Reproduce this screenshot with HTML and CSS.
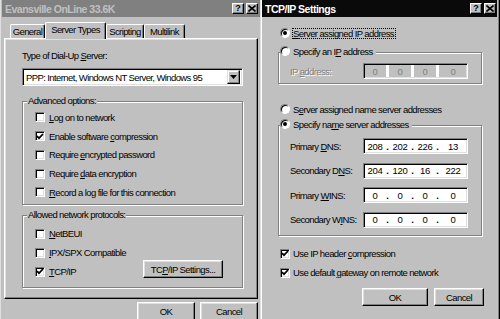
FILE: index.html
```html
<!DOCTYPE html>
<html>
<head>
<meta charset="utf-8">
<title>Dial-Up Server Types</title>
<link rel="stylesheet" href="styles.css">
</head>
<body>
<div class="desktop">
  <section class="win win-left">
    <div class="titlebar inactive">
      <span class="title">Evansville OnLine 33.6K</span>
      <span class="tbtns">
        <span class="tbtn help">?</span>
        <span class="tbtn close"><svg width="8" height="7" viewBox="0 0 8 7"><path d="M0.5 0.5 L7.5 6.5 M7.5 0.5 L0.5 6.5" stroke="#000" stroke-width="1.6"/></svg></span>
      </span>
    </div>
    <div class="tabs">
      <div class="tab t-general">General</div>
      <div class="tab active t-server">Server Types</div>
      <div class="tab t-script">Scripting</div>
      <div class="tab t-multi">Multilink</div>
    </div>
    <div class="panel">
      <div class="lbl">Type of Dial-Up <u>S</u>erver:</div>
      <div class="combo">
        <span class="combo-text">PPP: Internet, Windows NT Server, Windows 95</span>
        <span class="combo-btn"><svg width="7" height="4" viewBox="0 0 7 4"><path d="M0 0 H7 L3.5 4 Z" fill="#000"/></svg></span>
      </div>
      <div class="group g-adv">
        <span class="g-title">Advanced options:</span>
        <div class="chk-row"><span class="chk"></span><span><u>L</u>og on to network</span></div>
        <div class="chk-row"><span class="chk on"><svg width="8" height="7" viewBox="0 0 8 7"><path d="M1 3.2 L3 5.2 L7 1" fill="none" stroke="#000" stroke-width="1.7"/></svg></span><span>Enable software <u>c</u>ompression</span></div>
        <div class="chk-row"><span class="chk"></span><span>Require <u>e</u>ncrypted password</span></div>
        <div class="chk-row"><span class="chk"></span><span>Require <u>d</u>ata encryption</span></div>
        <div class="chk-row"><span class="chk"></span><span><u>R</u>ecord a log file for this connection</span></div>
      </div>
      <div class="group g-proto">
        <span class="g-title">Allowed network protocols:</span>
        <div class="chk-row p-row"><span class="chk"></span><span><u>N</u>etBEUI</span></div>
        <div class="chk-row p-row"><span class="chk"></span><span><u>I</u>PX/SPX Compatible</span></div>
        <div class="chk-row p-row"><span class="chk on"><svg width="8" height="7" viewBox="0 0 8 7"><path d="M1 3.2 L3 5.2 L7 1" fill="none" stroke="#000" stroke-width="1.7"/></svg></span><span><u>T</u>CP/IP</span>
          <span class="btn btn-settings">TC<u>P</u>/IP Settings...</span>
        </div>
      </div>
    </div>
    <div class="footer">
      <span class="btn btn-ok-l">OK</span>
      <span class="btn btn-cancel-l">Cancel</span>
    </div>
  </section>

  <section class="win win-right">
    <div class="titlebar active">
      <span class="title">TCP/IP Settings</span>
      <span class="tbtns">
        <span class="tbtn help">?</span>
        <span class="tbtn close"><svg width="8" height="7" viewBox="0 0 8 7"><path d="M0.5 0.5 L7.5 6.5 M7.5 0.5 L0.5 6.5" stroke="#000" stroke-width="1.6"/></svg></span>
      </span>
    </div>
    <div class="rbody">
      <div class="radio-row r-first"><span class="radio on"></span><span class="focus"><u>S</u>erver assigned IP address</span></div>
      <div class="group g-ip">
        <div class="radio-row g-radio"><span class="radio"></span><span class="rtext">Specify an I<u>P</u> address</span></div>
        <div class="ip-row">
          <span class="ip-label disabled">IP <u>a</u>ddress:</span>
          <span class="ip disabled-ip"><span class="seg">0</span><span class="dot"></span><span class="seg">0</span><span class="dot"></span><span class="seg">0</span><span class="dot"></span><span class="seg last">0</span></span>
        </div>
      </div>
      <div class="radio-row r-third"><span class="radio"></span><span class="rtext">S<u>e</u>rver assigned name server addresses</span></div>
      <div class="group g-dns">
        <div class="radio-row g-radio"><span class="radio on"></span><span class="rtext">Specify na<u>m</u>e server addresses</span></div>
        <div class="ip-rows">
          <div class="ip-row"><span class="ip-label">Primary <u>D</u>NS:</span>
            <span class="ip"><span class="seg">208</span><span class="dot">.</span><span class="seg">202</span><span class="dot">.</span><span class="seg">226</span><span class="dot">.</span><span class="seg last">13</span></span></div>
          <div class="ip-row"><span class="ip-label">Secondary D<u>N</u>S:</span>
            <span class="ip"><span class="seg">204</span><span class="dot">.</span><span class="seg">120</span><span class="dot">.</span><span class="seg">16</span><span class="dot">.</span><span class="seg last">222</span></span></div>
          <div class="ip-row"><span class="ip-label">Primary <u>W</u>INS:</span>
            <span class="ip"><span class="seg">0</span><span class="dot">.</span><span class="seg">0</span><span class="dot">.</span><span class="seg">0</span><span class="dot">.</span><span class="seg last">0</span></span></div>
          <div class="ip-row"><span class="ip-label">Secondary W<u>I</u>NS:</span>
            <span class="ip"><span class="seg">0</span><span class="dot">.</span><span class="seg">0</span><span class="dot">.</span><span class="seg">0</span><span class="dot">.</span><span class="seg last">0</span></span></div>
        </div>
      </div>
      <div class="chk-row r-chk r-chk1"><span class="chk on"><svg width="8" height="7" viewBox="0 0 8 7"><path d="M1 3.2 L3 5.2 L7 1" fill="none" stroke="#000" stroke-width="1.7"/></svg></span><span>Use IP header <u>c</u>ompression</span></div>
      <div class="chk-row r-chk"><span class="chk on"><svg width="8" height="7" viewBox="0 0 8 7"><path d="M1 3.2 L3 5.2 L7 1" fill="none" stroke="#000" stroke-width="1.7"/></svg></span><span>Use default <u>g</u>ateway on remote network</span></div>
      <div class="r-footer">
        <span class="btn btn-ok-r">OK</span>
        <span class="btn btn-cancel-r">Cancel</span>
      </div>
    </div>
  </section>
</div>
</body>
</html>
```

FILE: styles.css
```css
* { box-sizing: border-box; }
html, body { margin: 0; padding: 0; }
body {
  width: 500px;
  height: 319px;
  overflow: hidden;
  background: #c0c0c0;
  font-family: "Liberation Sans", Arial, sans-serif;
  font-size: 9.5px;
  letter-spacing: -0.6px;
  white-space: nowrap;
  color: #000;
}
u { text-decoration: underline; text-underline-offset: 1px; }

.desktop { display: flex; height: 319px; overflow: hidden; }

.win {
  background: #c0c0c0;
  height: 340px;
  display: flex;
  flex-direction: column;
  flex: none;
}
.win-left {
  width: 260px;
  border-left: 1px solid #dfdfdf;
  padding-left: 1px;
}
.win-right {
  width: 240px;
  border-left: 1px solid #dfdfdf;
  border-right: 1px solid #000;
  box-shadow: inset 1px 0 #fff, inset -1px 0 #808080;
  padding: 0 2px 0 1px;
}

/* title bars */
.titlebar {
  height: 17px;
  display: flex;
  align-items: center;
  justify-content: space-between;
  padding: 0 2px 0 3px;
  flex: none;
}
.titlebar.inactive { background: #808080; color: #c0c0c0; }
.titlebar.active { background: #0a0a0a; color: #fff; padding-right: 1px; }
.title { font-weight: bold; font-size: 10.5px; letter-spacing: -0.5px; }
.tbtns { display: flex; gap: 2px; }
.tbtn {
  width: 12px;
  height: 11px;
  background: #c0c0c0;
  border: 1px solid;
  border-color: #fff #000 #000 #fff;
  box-shadow: inset -1px -1px #808080;
  display: flex;
  align-items: center;
  justify-content: center;
  color: #000;
  font-weight: bold;
  font-size: 9px;
  letter-spacing: 0;
  line-height: 1;
}

/* tabs */
.tabs {
  display: flex;
  align-items: flex-end;
  height: 16px;
  margin-top: 5px;
  padding-left: 8px;
  position: relative;
  z-index: 2;
  flex: none;
}
.tab {
  height: 14px;
  border: 1px solid;
  border-color: #fff #000 transparent #fff;
  border-bottom: none;
  border-radius: 2px 2px 0 0;
  box-shadow: inset -1px 0 #808080;
  display: flex;
  align-items: center;
  justify-content: center;
  background: #c0c0c0;
  padding-bottom: 1px;
}
.t-general { width: 35px; }
.t-server { width: 61px; }
.t-script { width: 38px; }
.t-multi { width: 41px; }
.tab.active {
  height: 17px;
  margin-bottom: -1px;
  padding-bottom: 3px;
}

/* panel */
.panel {
  margin-left: 2px;
  width: 254px;
  height: 261px;
  border: 1px solid;
  border-color: #fff #000 #000 #fff;
  box-shadow: inset -1px -1px #808080, inset 1px 1px #dfdfdf;
  padding: 11px 14px 0 17px;
  display: flex;
  flex-direction: column;
  flex: none;
  position: relative;
  z-index: 1;
}
.lbl { line-height: 12px; height: 12px; }
.combo {
  margin-top: 6px;
  height: 18px;
  background: #fff;
  border: 1px solid;
  border-color: #808080 #fff #fff #808080;
  box-shadow: inset 1px 1px #000, inset -1px -1px #dfdfdf;
  display: flex;
  align-items: center;
  padding: 0 2px 0 2px;
}
.combo-text { flex: 1; padding-left: 1px; }
.combo-btn {
  width: 13px;
  height: 14px;
  background: #c0c0c0;
  border: 1px solid;
  border-color: #dfdfdf #000 #000 #dfdfdf;
  box-shadow: inset -1px -1px #808080, inset 1px 1px #fff;
  display: flex;
  align-items: center;
  justify-content: center;
}

/* group boxes */
.group {
  position: relative;
  border: 1px solid #808080;
  box-shadow: inset 1px 1px #fff, 1px 1px #fff;
  flex: none;
}
.g-title {
  position: absolute;
  top: -7px;
  left: 4px;
  line-height: 12px;
  padding: 0 1px;
  background: #c0c0c0;
}
.g-adv { margin-top: 15px; height: 104px; padding-top: 6px; }
.g-proto { margin-top: 10px; height: 73px; padding-top: 8px; }

.chk-row {
  display: flex;
  align-items: center;
  height: 18.75px;
  padding-left: 12px;
}
.p-row { height: 19px; }
.chk {
  width: 10px;
  height: 10px;
  flex: none;
  background: #fff;
  border: 1px solid;
  border-color: #808080 #fff #fff #808080;
  box-shadow: inset 1px 1px #000, inset -1px -1px #dfdfdf;
  margin-right: 4px;
  display: flex;
  align-items: center;
  justify-content: center;
}
.chk svg { display: block; }

.btn {
  display: flex;
  align-items: center;
  justify-content: center;
  background: #c0c0c0;
  border: 1px solid;
  border-color: #fff #000 #000 #fff;
  box-shadow: inset -1px -1px #808080, inset 1px 1px #dfdfdf;
  flex: none;
}
.btn-settings {
  width: 80px;
  height: 18px;
  margin-left: auto;
  margin-right: 19px;
  margin-top: -5px;
}

.footer {
  display: flex;
  justify-content: flex-end;
  gap: 5px;
  margin-top: 3px;
  padding-right: 2px;
}
.btn-ok-l, .btn-cancel-l { width: 58px; height: 22px; padding-bottom: 4px; }

/* right window */
.rbody { display: flex; flex-direction: column; }
.radio-row {
  display: flex;
  align-items: center;
  height: 14px;
}
.r-first { margin-top: 9px; margin-left: 18px; }
.radio {
  width: 10px;
  height: 10px;
  flex: none;
  border-radius: 50%;
  background: #fff;
  border: 1px solid;
  border-color: #808080 #fff #fff #808080;
  box-shadow: inset 1px 1px #000;
  position: relative;
}
.radio.on::after {
  content: "";
  position: absolute;
  left: 2px;
  top: 2px;
  width: 4px;
  height: 4px;
  border-radius: 50%;
  background: #000;
}
.focus {
  margin-left: 2px;
  border: 1px dotted #000;
  line-height: 9px;
  padding: 0 1px 0 0;
}
.rtext { margin-left: 3px; }

.g-radio {
  position: absolute;
  top: -9px;
  left: 1px;
  background: #c0c0c0;
  padding-right: 3px;
}
.g-ip { margin-top: 12px; margin-left: 16px; width: 204px; height: 32px; padding: 10px 0 0 11px; }
.r-third { margin-top: 18px; margin-left: 18px; }
.g-dns { margin-top: 9px; margin-left: 16px; width: 204px; height: 111px; padding: 12px 0 0 11px; }
.ip-rows { display: flex; flex-direction: column; gap: 8.67px; }
.ip-row { display: flex; align-items: center; height: 16px; }
.ip-label { width: 73px; flex: none; }
.ip-label.disabled { color: #808080; text-shadow: 1px 1px #fff; }
.ip {
  width: 105px;
  height: 16px;
  background: #fff;
  border: 1px solid;
  border-color: #808080 #fff #fff #808080;
  box-shadow: inset 1px 1px #000, inset -1px -1px #dfdfdf;
  display: flex;
  align-items: stretch;
  padding: 1px;
  letter-spacing: -0.3px;
}
.seg { width: 20px; display: flex; align-items: center; justify-content: center; flex: none; }
.seg.last { flex: 1; }
.dot { width: 5px; display: flex; align-items: center; justify-content: center; font-weight: bold; flex: none; }
.disabled-ip { background: #c0c0c0; color: #808080; }
.disabled-ip .dot { background: #fff; width: 3px; margin: 0 1px; }

.r-chk { padding-left: 18px; height: 19px; }
.r-chk1 { margin-top: 8px; }
.r-chk .chk { margin-right: 3px; }
.r-footer {
  display: flex;
  justify-content: flex-end;
  gap: 6px;
  margin-top: 6px;
  padding-right: 13px;
}
.btn-ok-r { width: 66px; height: 18px; }
.btn-cancel-r { width: 50px; height: 18px; }
```
